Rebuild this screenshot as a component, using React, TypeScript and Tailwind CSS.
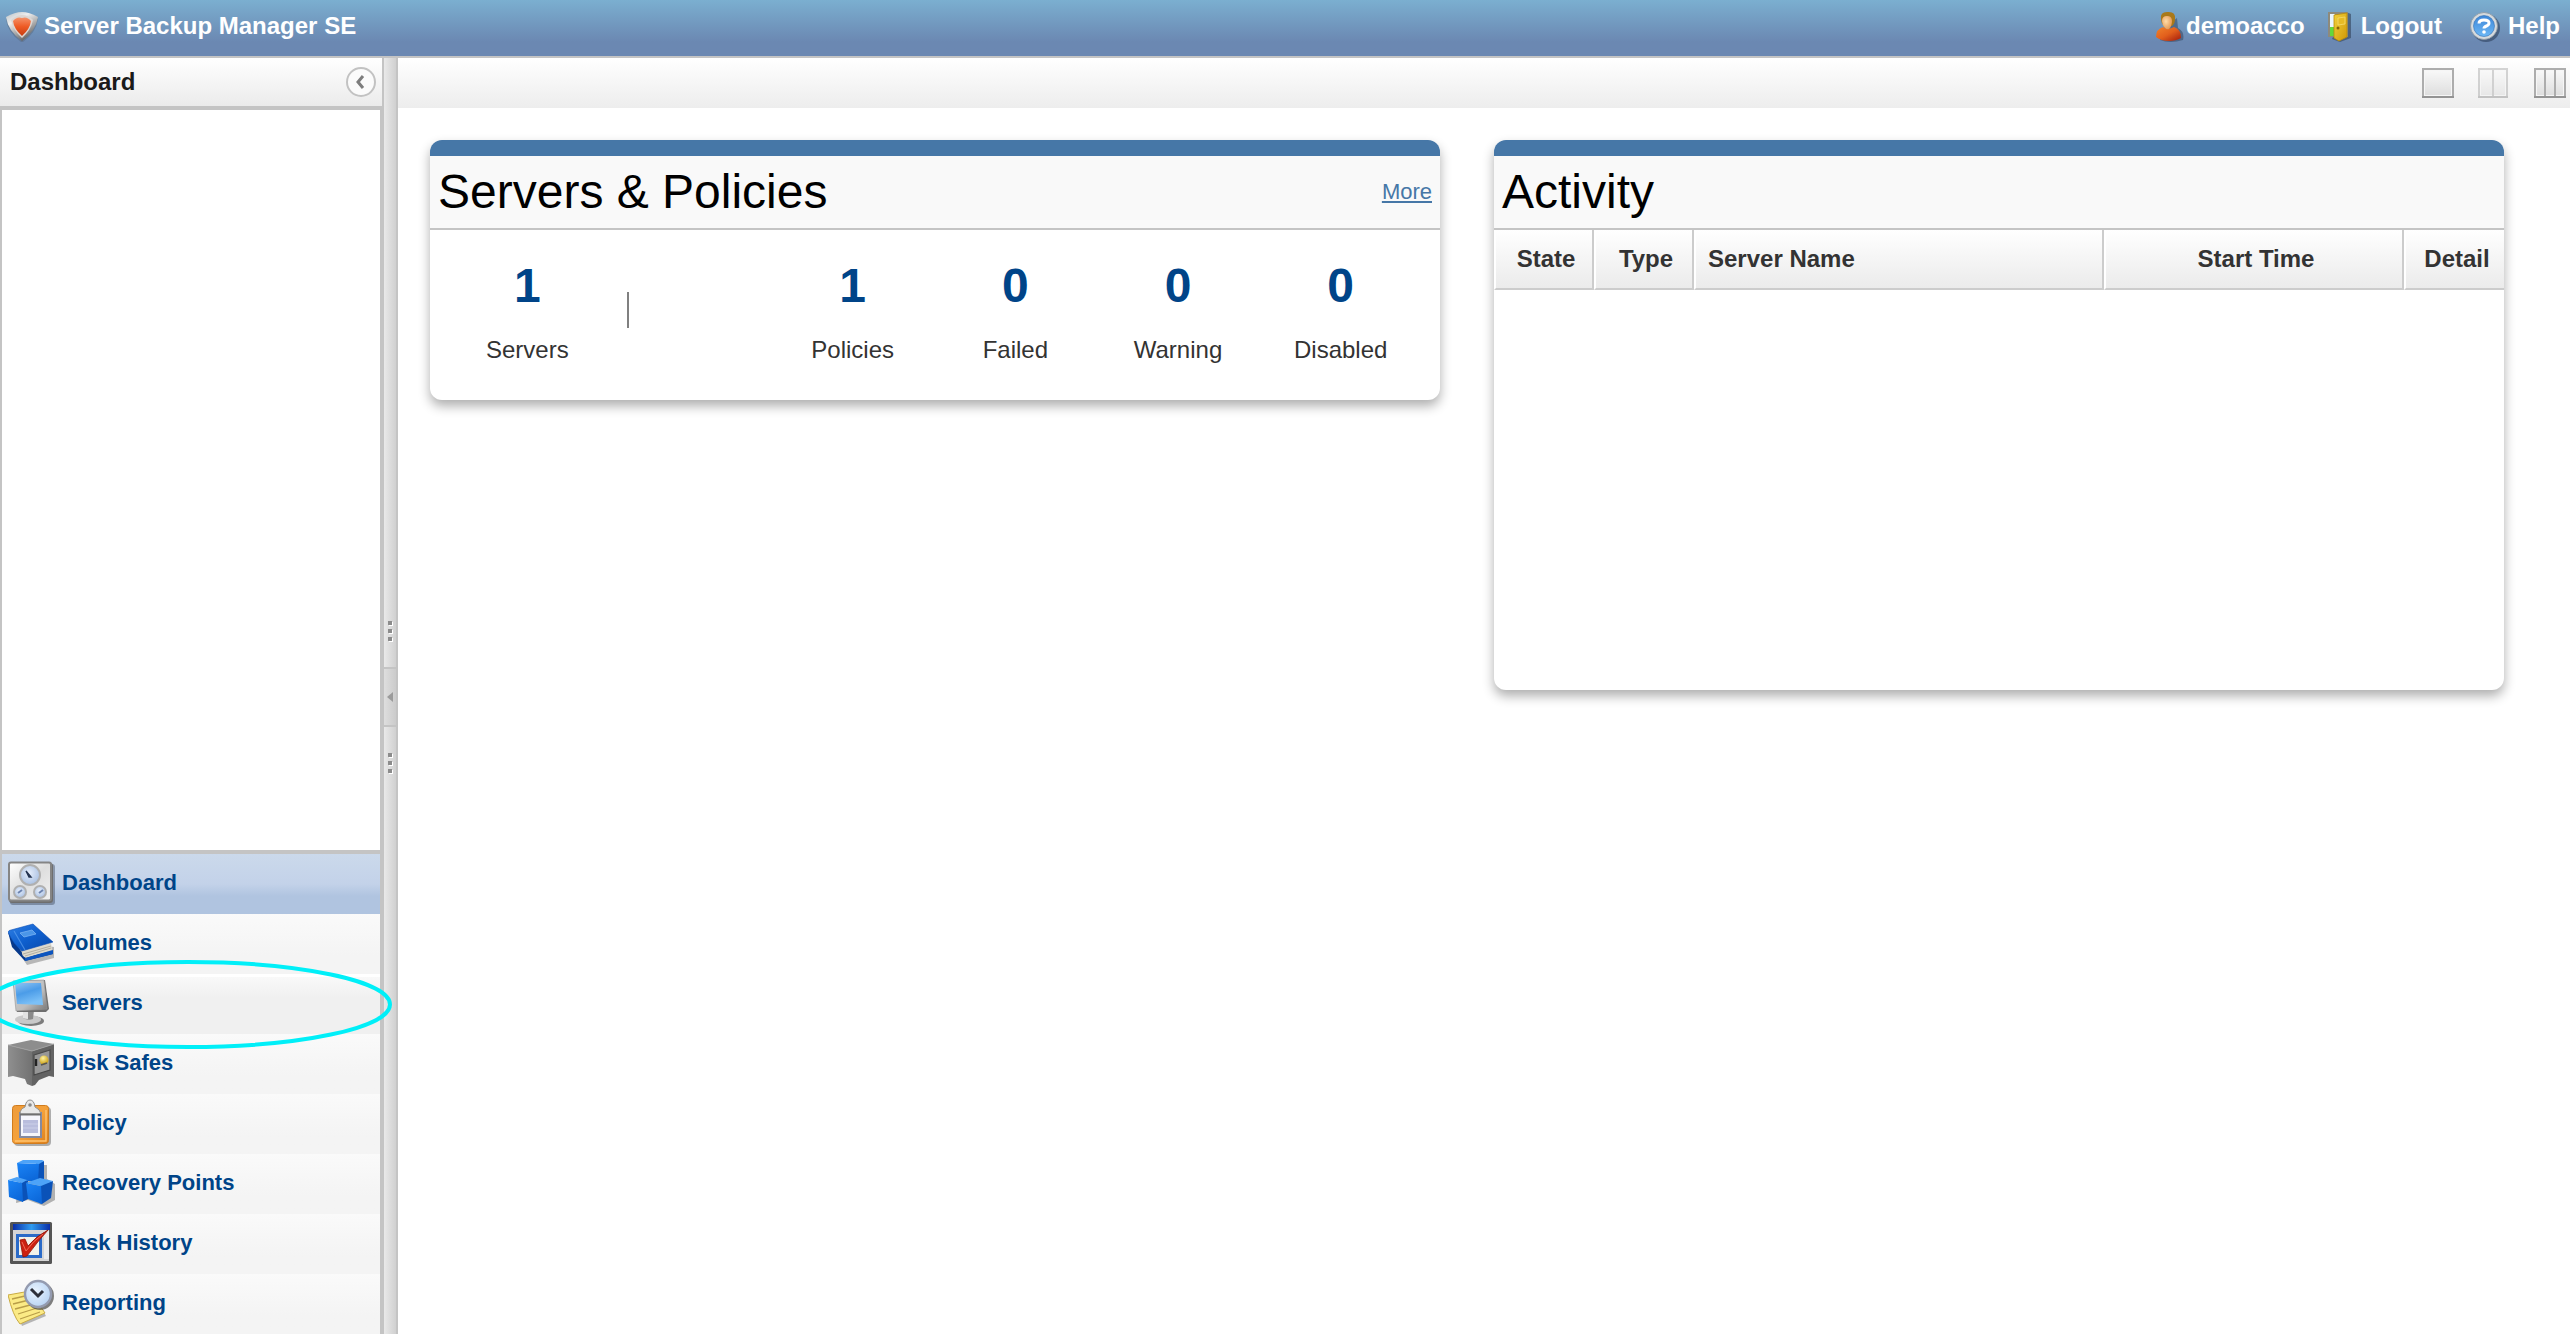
import React, { useState } from 'react';

interface NavItem {
  label: string;
  icon: React.ReactNode;
  highlighted?: boolean;
}

interface Stat {
  label: string;
  value: number;
}

const ShieldLogo = () => (
  <svg viewBox="0 0 32 32" className="h-8 w-8 shrink-0" aria-hidden="true">
    <defs>
      <linearGradient id="shieldRim" x1="0" y1="0" x2="0.6" y2="1">
        <stop offset="0" stopColor="#b9c0c4" />
        <stop offset="0.35" stopColor="#eeeeee" />
        <stop offset="0.7" stopColor="#a3a3a3" />
        <stop offset="1" stopColor="#5b5b5b" />
      </linearGradient>
      <linearGradient id="shieldCore" x1="0" y1="0" x2="0" y2="1">
        <stop offset="0" stopColor="#f5936a" />
        <stop offset="0.5" stopColor="#ee5a24" />
        <stop offset="1" stopColor="#c63d10" />
      </linearGradient>
    </defs>
    <path d="M0 9Q8 3 16 3Q24 3 32 9Q30 23 17 32H15Q1 22 0 9Z" fill="#56657a" opacity="0.45" />
    <path d="M0 7Q9 2 16 2Q23 2 32 7Q30 21 16 31Q2 21 0 7Z" fill="url(#shieldRim)" />
    <path d="M5 10Q10 5 16 5Q22 5 27 10Q25 20 16 28Q7 20 5 10Z" fill="#dcd6d3" />
    <path d="M7 11Q11 6 16 8Q21 6 25 11Q24 19 16 26Q8 19 7 11Z" fill="url(#shieldCore)" />
  </svg>
);

const UserIcon = () => (
  <svg viewBox="0 0 28 32" className="h-8 w-7 shrink-0" aria-hidden="true">
    <defs>
      <linearGradient id="userBody" x1="0" y1="0" x2="1" y2="1">
        <stop offset="0" stopColor="#f0842c" />
        <stop offset="0.5" stopColor="#e25f1c" />
        <stop offset="1" stopColor="#a31a0c" />
      </linearGradient>
      <radialGradient id="userFace" cx="0.4" cy="0.4" r="0.7">
        <stop offset="0" stopColor="#ffdca8" />
        <stop offset="1" stopColor="#e2914a" />
      </radialGradient>
    </defs>
    <path d="M4 30Q14 34 27 30Q29 22 22 18L21 8L8 18Z" fill="#2f3f57" opacity="0.5" />
    <path d="M0 27Q0 19 7 17Q12 20 18 17Q25 19 25 28Q20 31 13 31Q5 31 0 27Z" fill="url(#userBody)" />
    <path d="M5 9Q4 2 11 2Q20 1 19 9Q19 14 16 16H8Q5 13 5 9Z" fill="#a9791a" />
    <path d="M6 11Q6 6 11 6Q16 6 16 11Q16 16 13 19Q11 20 9 18Q6 15 6 11Z" fill="url(#userFace)" />
  </svg>
);

const DoorIcon = () => (
  <svg viewBox="0 0 26 32" className="h-8 w-[26px] shrink-0" aria-hidden="true">
    <defs>
      <linearGradient id="doorPanel" x1="0" y1="0" x2="1" y2="1">
        <stop offset="0" stopColor="#f3d23c" />
        <stop offset="1" stopColor="#cf9806" />
      </linearGradient>
    </defs>
    <path d="M5 29L13 32L24 28V4L19 2Z" fill="#33435a" opacity="0.6" />
    <path d="M1 2H21V27H1Z" fill="#8d8a7c" />
    <path d="M3 4H8V26H3Z" fill="#e9f6ff" />
    <path d="M3 17H8V26H3Z" fill="#63d83c" />
    <path d="M7 5L20 3V27L12 31L7 28Z" fill="url(#doorPanel)" stroke="#b98a08" strokeWidth="0.8" />
    <path d="M11 8L18 7V14L11 15Z" fill="#e6bb25" stroke="#f5dc70" strokeWidth="0.8" />
    <circle cx="11" cy="18" r="1.5" fill="#8a6408" />
  </svg>
);

const HelpIcon = () => (
  <svg viewBox="0 0 32 32" className="h-8 w-8 shrink-0" aria-hidden="true">
    <defs>
      <linearGradient id="helpDisc" x1="0" y1="0" x2="0" y2="1">
        <stop offset="0" stopColor="#3d86d8" />
        <stop offset="1" stopColor="#6db8f5" />
      </linearGradient>
    </defs>
    <circle cx="16" cy="18" r="14" fill="#2d3f5c" opacity="0.6" />
    <circle cx="14" cy="16" r="13.5" fill="#d5dade" stroke="#8d979f" strokeWidth="0.8" />
    <circle cx="14" cy="16" r="10.5" fill="url(#helpDisc)" stroke="#3470b4" strokeWidth="0.6" />
    <path d="M9 13.5Q9 10 14 10Q19 10 19 13Q19 15 16.500 16Q14 17 14 18.5" fill="none" stroke="#fff" strokeWidth="3" />
    <circle cx="14" cy="22" r="1.800" fill="#fff" />
  </svg>
);

const GaugesIcon = () => (
  <svg viewBox="0 0 48 48" className="h-12 w-12 shrink-0" aria-hidden="true">
    <defs>
      <linearGradient id="gaugePanel" x1="0" y1="0" x2="1" y2="1">
        <stop offset="0" stopColor="#ffffff" />
        <stop offset="0.5" stopColor="#dedede" />
        <stop offset="1" stopColor="#f2f2f2" />
      </linearGradient>
      <radialGradient id="gaugeFace" cx="0.45" cy="0.4" r="0.6">
        <stop offset="0" stopColor="#e6eefb" />
        <stop offset="1" stopColor="#a9c0e2" />
      </radialGradient>
    </defs>
    <rect x="2" y="5" width="45" height="41" rx="3" fill="#30394a" opacity="0.4" />
    <rect x="1" y="4" width="44" height="40" rx="3" fill="#6e6e6e" />
    <rect x="1" y="3.500" width="42" height="38" rx="2" fill="url(#gaugePanel)" stroke="#858585" strokeWidth="2" />
    <circle cx="22" cy="16" r="10" fill="url(#gaugeFace)" stroke="#b0b0b0" strokeWidth="2" />
    <circle cx="12" cy="33" r="6" fill="url(#gaugeFace)" stroke="#b0b0b0" strokeWidth="2" />
    <circle cx="32" cy="33" r="6" fill="url(#gaugeFace)" stroke="#b0b0b0" strokeWidth="2" />
    <path d="M18 12L23 18L21 18Z" fill="#243350" stroke="#243350" strokeWidth="1.4" />
    <path d="M10 34L14 31M31 34L35 31" stroke="#6d84b0" strokeWidth="2" />
  </svg>
);

const BookIcon = () => (
  <svg viewBox="0 0 48 48" className="h-12 w-12 shrink-0" aria-hidden="true">
    <defs>
      <linearGradient id="bookCover" x1="0" y1="0" x2="1" y2="1">
        <stop offset="0" stopColor="#2f7fe4" />
        <stop offset="0.5" stopColor="#0e5fce" />
        <stop offset="1" stopColor="#0847a8" />
      </linearGradient>
    </defs>
    <path d="M3 22L19 46L46 39V28Z" fill="#444" opacity="0.35" />
    <path d="M0 13L4 28L17 42L45 35V32L17 38L13 32Z" fill="#07398b" />
    <path d="M14 32L43 23L44 31L18 39Q13 37 14 32Z" fill="#ddd9cd" />
    <path d="M15 35L43 27M17 37L43 29" stroke="#a7a294" strokeWidth="0.8" />
    <path d="M0 13Q1 11 3 11L25 5L45 23L14 32Q5 25 0 13Z" fill="url(#bookCover)" stroke="#0a4db5" strokeWidth="0.6" />
    <path d="M6 12L17 31" stroke="#67a8f3" strokeWidth="1.2" opacity="0.6" />
    <path d="M12 14L24 11L28 15L16 18Z" fill="#4b96e8" stroke="#78b3f2" strokeWidth="0.8" />
    <path d="M17 39L45 31V35L17 42Z" fill="#0d55bf" />
  </svg>
);

const MonitorIcon = () => (
  <svg viewBox="0 0 48 48" className="h-12 w-12 shrink-0" aria-hidden="true">
    <defs>
      <linearGradient id="screen" x1="0" y1="0" x2="0.4" y2="1">
        <stop offset="0" stopColor="#8fc4f3" />
        <stop offset="0.5" stopColor="#4b9ce8" />
        <stop offset="1" stopColor="#7bc0f7" />
      </linearGradient>
      <linearGradient id="monitorCase" x1="0" y1="0" x2="1" y2="1">
        <stop offset="0" stopColor="#d4d4d4" />
        <stop offset="0.6" stopColor="#bdbdbd" />
        <stop offset="1" stopColor="#777" />
      </linearGradient>
    </defs>
    <ellipse cx="23" cy="42" rx="13" ry="5" fill="#4a4a4a" opacity="0.7" />
    <ellipse cx="20" cy="40.500" rx="13" ry="4.500" fill="#c9c9c9" />
    <path d="M15 31H26L25 40Q20 42 15 39Z" fill="#8b8b8b" />
    <path d="M15 31H20V40Q17 40 15 39Z" fill="#e2e2e2" />
    <path d="M5 2L37 1L41 30L38 33L9 33Z" fill="#6e6e6e" />
    <path d="M5 2L36 1L39 30L8 32Z" fill="url(#monitorCase)" stroke="#969696" strokeWidth="0.6" />
    <path d="M7 4L33 4L35 26L9 25Z" fill="url(#screen)" />
  </svg>
);

const SafeIcon = () => (
  <svg viewBox="0 0 48 48" className="h-12 w-12 shrink-0" aria-hidden="true">
    <defs>
      <linearGradient id="safeSide" x1="0" y1="0" x2="1" y2="0">
        <stop offset="0" stopColor="#8f8f8f" />
        <stop offset="1" stopColor="#727272" />
      </linearGradient>
      <radialGradient id="safeKnob" cx="0.4" cy="0.3" r="0.7">
        <stop offset="0" stopColor="#fff3a0" />
        <stop offset="1" stopColor="#c99d12" />
      </radialGradient>
    </defs>
    <path d="M0 6L23 1L46 5L24 12Z" fill="#8d8d8d" />
    <path d="M0 6L24 12V47L19 45L17 40L5 37L0 38Z" fill="url(#safeSide)" />
    <path d="M24 12L46 5V38L41 37L31 41L27 46L24 47Z" fill="#636363" />
    <path d="M0 6L24 12L46 5" fill="none" stroke="#a0a0a0" strokeWidth="1" />
    <path d="M26 16L42 11V31L26 36Z" fill="#979797" stroke="#484848" strokeWidth="1.2" />
    <path d="M28 20V27" stroke="#222" strokeWidth="2.4" />
    <circle cx="36" cy="21" r="4.500" fill="url(#safeKnob)" />
    <path d="M33 26L39 24" stroke="#555" strokeWidth="1.4" />
  </svg>
);

const ClipboardIcon = () => (
  <svg viewBox="0 0 48 48" className="h-12 w-12 shrink-0" aria-hidden="true">
    <defs>
      <linearGradient id="board" x1="0" y1="0" x2="1" y2="1">
        <stop offset="0" stopColor="#ee9c3c" />
        <stop offset="0.5" stopColor="#f5a13a" />
        <stop offset="1" stopColor="#dd7f1a" />
      </linearGradient>
    </defs>
    <rect x="6" y="8" width="37" height="39" rx="4" fill="#555" opacity="0.45" />
    <rect x="4.500" y="6.500" width="36" height="38" rx="3" fill="url(#board)" stroke="#d07c1e" />
    <path d="M7 42H38V11" fill="none" stroke="#ffc46f" strokeWidth="1.4" />
    <rect x="12" y="14" width="21" height="24" fill="#f6f6fc" stroke="#858aa0" strokeWidth="2" />
    <rect x="15" y="21" width="15" height="13" fill="#b9bddd" />
    <path d="M15 25H30M15 29H30" stroke="#cbcfe8" strokeWidth="1" />
    <path d="M12 15Q12 10 17 8Q18 1 22 1Q26 1 27 8Q32 10 33 15Z" fill="#e8e8e8" stroke="#8f8f8f" strokeWidth="1" />
    <circle cx="22" cy="6" r="1.800" fill="#8a8a8a" />
    <path d="M12 15.500H33" stroke="#707070" strokeWidth="2" />
  </svg>
);

const CubesIcon = () => (
  <svg viewBox="0 0 48 48" className="h-12 w-12 shrink-0" aria-hidden="true">
    <defs>
      <linearGradient id="cubeFront" x1="0" y1="0" x2="0.5" y2="1">
        <stop offset="0" stopColor="#1b84f6" />
        <stop offset="1" stopColor="#0c68da" />
      </linearGradient>
    </defs>
    <path d="M12 6H39V20L47 25V41L36 47L20 41L8 44Z" fill="#333" opacity="0.35" />
    <path d="M28 4L36 2V20L31 23H28Z" fill="#0a52b8" />
    <path d="M9 4L31 5L30 23L11 21Z" fill="url(#cubeFront)" />
    <path d="M9 4L15 1H34L36 2L31 5Z" fill="#4da3f8" />
    <path d="M12 22L20 22V40L14 43Z" fill="#0a52b8" />
    <path d="M0 21L14 24L15 43L1 38Z" fill="url(#cubeFront)" />
    <path d="M0 21L9 18L19 21L14 24Z" fill="#4da3f8" />
    <path d="M32 26L45 22L43 39L34 45L31 44Z" fill="#0a52b8" />
    <path d="M18 24L33 27L34 45L20 40Z" fill="url(#cubeFront)" />
    <path d="M18 24L32 19L45 22L33 27Z" fill="#4da3f8" />
  </svg>
);

const TaskIcon = () => (
  <svg viewBox="0 0 48 48" className="h-12 w-12 shrink-0" aria-hidden="true">
    <defs>
      <linearGradient id="taskBar" x1="0" y1="0" x2="1" y2="0">
        <stop offset="0" stopColor="#0a2ea8" />
        <stop offset="0.5" stopColor="#2f9cf0" />
        <stop offset="1" stopColor="#0a2ea8" />
      </linearGradient>
    </defs>
    <rect x="2" y="3" width="42" height="42" rx="1.500" fill="#555" />
    <rect x="5" y="5" width="36" height="37" fill="#d5d5d5" />
    <rect x="5" y="5" width="37" height="6" fill="url(#taskBar)" />
    <rect x="36" y="12" width="5" height="28" fill="#ececec" />
    <rect x="9.500" y="16.500" width="23" height="21" fill="#f4f3ea" stroke="#2b6bc8" strokeWidth="3" />
    <path d="M12 21L17 20L20 27Q28 17 40 11Q30 22 19 37L15 38Z" fill="#cc2010" stroke="#8e1307" strokeWidth="0.8" />
    <path d="M14 23L18 32Q25 22 35 15" fill="none" stroke="#ee6a55" strokeWidth="1" />
  </svg>
);

const ReportIcon = () => (
  <svg viewBox="0 0 48 48" className="h-12 w-12 shrink-0" aria-hidden="true">
    <defs>
      <radialGradient id="clockFace" cx="0.4" cy="0.4" r="0.7">
        <stop offset="0" stopColor="#e9f3ff" />
        <stop offset="1" stopColor="#b3d0f2" />
      </radialGradient>
    </defs>
    <path d="M3 21L14 47L38 37L26 18Z" fill="#555" opacity="0.4" />
    <path d="M0 16L22 12L37 34L12 45Q5 37 0 16Z" fill="#fbea85" stroke="#c8aa42" strokeWidth="1" />
    <path d="M4 20L17 17M5 25L21 21M7 30L26 25M10 35L29 29M12 40L32 33" stroke="#b89d48" strokeWidth="1.300" />
    <circle cx="32" cy="17" r="14" fill="#4b4b4b" opacity="0.7" />
    <circle cx="30" cy="15" r="13" fill="url(#clockFace)" stroke="#949bb0" strokeWidth="2.400" />
    <path d="M23 10L30 17L35 12" fill="none" stroke="#2c2f3a" strokeWidth="3" />
  </svg>
);

const navItems: NavItem[] = [
  { label: 'Dashboard', icon: <GaugesIcon /> },
  { label: 'Volumes', icon: <BookIcon /> },
  { label: 'Servers', icon: <MonitorIcon />, highlighted: true },
  { label: 'Disk Safes', icon: <SafeIcon /> },
  { label: 'Policy', icon: <ClipboardIcon /> },
  { label: 'Recovery Points', icon: <CubesIcon /> },
  { label: 'Task History', icon: <TaskIcon /> },
  { label: 'Reporting', icon: <ReportIcon /> }
];

const policyStats: Stat[] = [
  { label: 'Policies', value: 1 },
  { label: 'Failed', value: 0 },
  { label: 'Warning', value: 0 },
  { label: 'Disabled', value: 0 }
];

const StatCell: React.FC<Stat> = ({ label, value }) => (
  <div className="text-center">
    <div className="text-[48px] leading-[56px] font-bold text-[#004488]">{value}</div>
    <div className="mt-[22px] text-2xl leading-7 text-[#333333]">{label}</div>
  </div>
);

interface CardProps {
  title: string;
  link?: string;
  className?: string;
  children: React.ReactNode;
}

const Card: React.FC<CardProps> = ({ title, link, className, children }) => (
  <section className={`rounded-[12px] bg-white shadow-[0_6px_12px_rgba(0,0,0,0.32)] ${className ?? ''}`}>
    <div className="h-4 rounded-t-[12px] bg-[#4677a7]" />
    <div className="flex h-[74px] items-center justify-between border-b-2 border-[#c4c4c4] bg-[#f9f9f9] px-2">
      <h2 className="text-[48px] leading-[56px] text-black">{title}</h2>
      {link && (
        <a href="#more" className="text-[22px] leading-7 text-[#4677a7] underline">
          {link}
        </a>
      )}
    </div>
    {children}
  </section>
);

const GripDots = () => (
  <div className="flex flex-col gap-1">
    {[0, 1, 2].map(dot => (
      <span key={dot} className="h-1 w-1 bg-[#8c8c8c] shadow-[1px_1px_0_#ffffff]" />
    ))}
  </div>
);

// Page layout switcher glyph with one, two or three columns
const ColumnsIcon: React.FC<{ columns: number }> = ({ columns }) => (
  <svg viewBox="0 0 32 30" className="h-[30px] w-8" aria-hidden="true">
    <defs>
      <linearGradient id={`columns${columns}`} x1="0" y1="0" x2="0" y2="1">
        <stop offset="0" stopColor="#fafafa" />
        <stop offset="1" stopColor="#dcdcdc" />
      </linearGradient>
    </defs>
    <rect x="1" y="1" width={columns === 2 ? 28 : 30} height="28" fill={`url(#columns${columns})`} stroke="#adadad" strokeWidth="2" />
    <rect x="2.500" y="2.500" width={columns === 2 ? 25 : 27} height="25" fill="none" stroke="#f6f6f6" />
    {columns === 2 && <path d="M15 2V28" stroke="#adadad" strokeWidth="2" />}
    {columns === 3 && <path d="M11 2V28M21 2V28" stroke="#adadad" strokeWidth="2" />}
    <path d={columns === 2 ? 'M0 29H30' : 'M0 29H32'} stroke="#949494" strokeWidth="2" />
  </svg>
);

const App: React.FC = () => {
  const [active, setActive] = useState('Dashboard');
  const [columns, setColumns] = useState(2);

  const getItemBackground = (item: NavItem) => {
    if (item.label === active) return 'bg-linear-to-b from-[#cbd9eb] via-[#c3d2e9] to-[#b0c4e0] to-70%';
    if (item.highlighted) return 'bg-linear-to-b from-[#fafafa] to-[#f0f0f0] to-40% shadow-[inset_0_3px_0_#ffffff]';
    return 'bg-linear-to-b from-[#fafafa] to-[#f4f4f4] to-70%';
  };

  return (
    <div className="flex h-screen flex-col overflow-hidden bg-white font-['Liberation_Sans',Arial,sans-serif]">
      {/* Top bar */}
      <header className="flex h-[58px] shrink-0 items-center justify-between border-b-2 border-[#c4c4c4] bg-linear-to-b from-[#7bafd0] to-[#6b88b2] to-75% pr-[10px] pb-1 pl-[6px] text-2xl leading-7 font-bold text-white">
        <div className="flex items-center gap-[6px]">
          <ShieldLogo />
          <h1>Server Backup Manager SE</h1>
        </div>
        <nav className="flex items-center">
          <a href="#account" className="flex items-center gap-[2px]">
            <UserIcon />
            demoacco
          </a>
          <a href="#logout" className="ml-[22px] flex items-center gap-2">
            <DoorIcon />
            Logout
          </a>
          <a href="#help" className="ml-7 flex items-center gap-[6px]">
            <HelpIcon />
            Help
          </a>
        </nav>
      </header>

      <div className="flex min-h-0 flex-1">
        {/* Sidebar */}
        <aside className="relative z-10 flex w-96 shrink-0 flex-col">
          <div className="flex h-12 shrink-0 items-center justify-between border-r-2 border-[#c4c4c4] bg-linear-to-b from-white to-[#ebebeb] pr-[6px] pl-[10px]">
            <h2 className="text-2xl leading-7 font-bold text-[#1a1a1a]">Dashboard</h2>
            <button type="button" aria-label="Collapse sidebar">
              <svg viewBox="0 0 30 30" className="h-[30px] w-[30px]" aria-hidden="true">
                <circle cx="15" cy="15" r="14" fill="#fbfbfb" stroke="#c2c2c2" strokeWidth="2" />
                <path d="M17 9L12 15L17 21" fill="none" stroke="#7d7d7d" strokeWidth="3" />
              </svg>
            </button>
          </div>
          <div className="min-h-0 flex-1 border-y-4 border-r-4 border-l-2 border-[#c4c4c4] bg-white" />
          <ul className="shrink-0 border-r-4 border-l-2 border-[#c4c4c4]">
            {navItems.map(item => (
              <li key={item.label} className="relative">
                <button
                  type="button"
                  onClick={() => setActive(item.label)}
                  className={`flex h-[60px] w-full items-center gap-[6px] pb-[2px] pl-[6px] text-left text-[22px] leading-7 font-bold text-[#004488] ${getItemBackground(item)}`}
                >
                  {item.icon}
                  {item.label}
                </button>
                {item.highlighted && (
                  <svg
                    viewBox="0 0 394 90"
                    className="pointer-events-none absolute -top-[14px] -left-[2px] z-20 h-[90px] w-[394px] max-w-none"
                    aria-hidden="true"
                  >
                    <ellipse cx="188" cy="44.500" rx="202" ry="42.500" fill="none" stroke="#00eff8" strokeWidth="4" />
                  </svg>
                )}
              </li>
            ))}
          </ul>
        </aside>

        {/* Splitter */}
        <div className="flex w-[14px] shrink-0 flex-col items-center justify-center gap-[26px] border-r-2 border-[#c4c4c4] bg-linear-to-r from-[#e9e9e9] to-[#d0d0d0] pt-[2px]">
          <GripDots />
          <button
            type="button"
            aria-label="Toggle sidebar"
            className="flex h-[60px] w-full items-center justify-center border-y-2 border-[#c4c4c4] bg-linear-to-r from-[#dedede] to-[#cbcbcb]"
          >
            <svg viewBox="0 0 6 10" className="h-[10px] w-[6px]" aria-hidden="true">
              <path d="M6 0V10L0 5Z" fill="#9b9b9b" />
            </svg>
          </button>
          <GripDots />
        </div>

        {/* Content */}
        <main className="min-w-0 flex-1">
          <div className="flex h-[50px] items-start justify-end gap-6 bg-linear-to-b from-white to-[#ededed] pt-[10px] pr-1">
            {[1, 2, 3].map(count => (
              <button
                key={count}
                type="button"
                aria-label={`${count} column layout`}
                disabled={count === columns}
                onClick={() => setColumns(count)}
                className="disabled:opacity-50"
              >
                <ColumnsIcon columns={count} />
              </button>
            ))}
          </div>

          <div className="grid grid-cols-2 items-start gap-[54px] pt-8 pr-[66px] pl-8">
            <Card title="Servers & Policies" link="More">
              <div className="grid grid-cols-6 pt-7 pr-[18px] pb-9 pl-4">
                <StatCell label="Servers" value={1} />
                <div className="mt-[34px] ml-[18px] h-9 w-[2px] bg-[#808080]" />
                {policyStats.map(stat => (
                  <StatCell key={stat.label} label={stat.label} value={stat.value} />
                ))}
              </div>
            </Card>

            <Card title="Activity" className="min-h-[550px]">
              <table className="w-full table-fixed border-separate border-spacing-0 text-2xl leading-7 text-[#333333]">
                <thead>
                  <tr className="h-[60px] [&>th]:border-b-2 [&>th]:border-l-2 [&>th]:border-b-[#cccccc] [&>th]:border-l-white [&>th]:bg-linear-to-b [&>th]:from-white [&>th]:to-[#ebebeb]">
                    <th className="w-[100px] border-r-2 border-r-[#cccccc] pl-1">State</th>
                    <th className="w-[100px] border-r-2 border-r-[#cccccc] pl-1">Type</th>
                    <th className="border-r-2 border-r-[#cccccc] pl-3 text-left">Server Name</th>
                    <th className="w-[300px] border-r-2 border-r-[#cccccc] pl-1">Start Time</th>
                    <th className="w-[100px] pl-1">Detail</th>
                  </tr>
                </thead>
                <tbody />
              </table>
            </Card>
          </div>
        </main>
      </div>
    </div>
  );
};

export default App;
